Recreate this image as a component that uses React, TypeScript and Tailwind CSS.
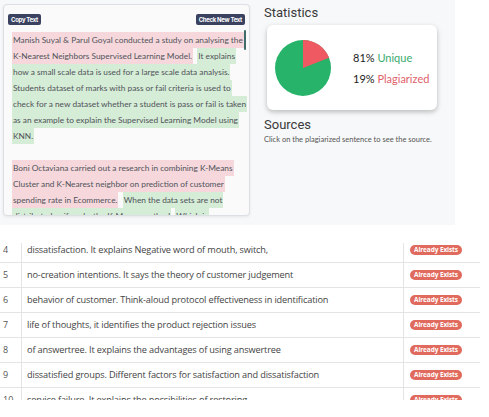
import React from 'react';

type Seg = { t: string; k: 'p' | 'u' | 'n' };

const lines: Seg[][] = [
    [{ t: 'Manish Suyal & Parul Goyal conducted a study on analysing the', k: 'p' }],
    [
        { t: 'K-Nearest Neighbors Supervised Learning Model.', k: 'p' },
        { t: '  ', k: 'n' },
        { t: 'It explains', k: 'u' },
    ],
    [{ t: 'how a small scale data is used for a large scale data analysis.', k: 'u' }],
    [{ t: 'Students dataset of marks with pass or fail criteria is used to', k: 'u' }],
    [{ t: 'check for a new dataset whether a student is pass or fail is taken', k: 'u' }],
    [{ t: 'as an example to explain the Supervised Learning Model using', k: 'u' }],
    [{ t: 'KNN.', k: 'u' }],
    [{ t: '\u00a0', k: 'n' }],
    [{ t: 'Boni Octaviana carried out a research in combining K-Means', k: 'p' }],
    [{ t: 'Cluster and K-Nearest neighbor on prediction of customer', k: 'p' }],
    [
        { t: 'spending rate in Ecommerce.', k: 'p' },
        { t: '  ', k: 'n' },
        { t: 'When the data sets are not', k: 'u' },
    ],
    [
        { t: 'distributed uniformly, the K-Means method', k: 'u' },
        { t: '  ', k: 'n' },
        { t: 'Which is', k: 'u' },
    ],
];

const rows = [
    { n: 4, text: 'dissatisfaction. It explains Negative word of mouth, switch,' },
    { n: 5, text: 'no-creation intentions. It says the theory of customer judgement' },
    { n: 6, text: 'behavior of customer. Think-aloud protocol effectiveness in identification' },
    { n: 7, text: 'life of thoughts, it identifies the product rejection issues' },
    { n: 8, text: 'of answertree. It explains the advantages of using answertree' },
    { n: 9, text: 'dissatisfied groups. Different factors for satisfaction and dissatisfaction' },
    { n: 10, text: 'service failure. It explains the possibilities of restoring' },
];

function Pie() {
    // 19% plagiarized slice starting at 12 o'clock
    const r = 28;
    const a = 0.19 * Math.PI * 2;
    const x = 30 + r * Math.sin(a);
    const y = 30 - r * Math.cos(a);
    return (
        <svg width="60" height="60" viewBox="0 0 60 60">
            <circle cx="30" cy="30" r={r} fill="#27b36a" />
            <path d={`M30 30 L30 2 A${r} ${r} 0 0 1 ${x} ${y} Z`} fill="#ef5a62" />
        </svg>
    );
}

export default function App() {
    return (
        <div className="w-[489px] h-[417px] bg-white overflow-hidden">
            {/* Top panel */}
            <div className="w-[455px] h-[225px] bg-[#f7f8f9] flex">
                <div className="ml-[3px] mt-[4px] w-[247px] h-[212px] bg-[#fafafa] border border-[#dcdfe3] rounded-[4px] shadow-[0_1px_3px_rgba(0,0,0,0.08)] flex flex-col overflow-hidden">
                    <div className="flex justify-between px-[4px] pt-[9px]">
                        <span className="bg-[#3a4260] text-white text-[6px] font-bold px-[3px] h-[11px] leading-[11px] rounded-[2px] font-['Inter',sans-serif] tracking-[-0.3px]">
                            Copy Text
                        </span>
                        <span className="bg-[#3a4260] text-white text-[6px] font-bold px-[3px] h-[11px] leading-[11px] rounded-[2px] font-['Inter',sans-serif] tracking-[-0.3px]">
                            Check New Text
                        </span>
                    </div>
                    <div className="relative flex-1 overflow-hidden pl-[8px] pt-[7px]">
                        <div className="absolute right-[3px] top-[5px] w-[2px] h-[20px] bg-[#3f6b6a] rounded-full" />
                        <div className="font-['Lato',sans-serif] text-[8.3px] text-[#50535a]">
                            {lines.map((l, i) => (
                                <div key={i} className="h-[16px] leading-[16px] whitespace-pre">
                                    {l.map((s, j) => (
                                        <span
                                            key={j}
                                            className={
                                                s.k === 'p'
                                                    ? 'bg-[#f6d8dc] py-[3px] px-[1px]'
                                                    : s.k === 'u'
                                                      ? 'bg-[#d5ecd6] py-[3px] px-[1px]'
                                                      : ''
                                            }
                                        >
                                            {s.t}
                                        </span>
                                    ))}
                                </div>
                            ))}
                        </div>
                    </div>
                </div>

                <div className="ml-[14px] pt-[5px] font-['Roboto',sans-serif]">
                    <div className="text-[13px] text-[#3a3a3a] leading-[16px]">Statistics</div>
                    <div className="mt-[4px] ml-[3px] w-[170px] h-[85px] bg-white rounded-[6px] shadow-[0_2px_5px_rgba(0,0,0,0.25)] flex items-center pl-[6px]">
                        <Pie />
                        <div className="ml-[20px] text-[11px] leading-[21px] font-['Lato',sans-serif]">
                            <div>
                                <span className="text-[#222]">81%</span>{' '}
                                <span className="text-[#3aab6e]">Unique</span>
                            </div>
                            <div>
                                <span className="text-[#222]">19%</span>{' '}
                                <span className="text-[#e0606a]">Plagiarized</span>
                            </div>
                        </div>
                    </div>
                    <div className="mt-[7px] text-[13px] text-[#3a3a3a] leading-[16px]">Sources</div>
                    <div className="mt-[1px] text-[7.5px] text-[#555] font-['Lato',sans-serif]">
                        Click on the plagiarized sentence to see the source.
                    </div>
                </div>
            </div>

            {/* Table */}
            <div className="mt-[18px] h-[157px] w-[480px] overflow-hidden font-['Open_Sans',sans-serif]">
                <div className="-mt-[5px]">
                    {rows.map((r) => (
                        <div key={r.n} className="flex h-[25px] border-b border-[#e4e4e4]">
                            <div className="w-[22px] border-r border-[#e4e4e4] pl-[3px] text-[9px] text-[#555] flex items-center">
                                {r.n}
                            </div>
                            <div className="w-[382px] border-r border-[#e4e4e4] pl-[5px] text-[9.2px] text-[#444] flex items-center tracking-[-0.15px]">
                                {r.text}
                            </div>
                            <div className="flex-1 flex items-center pl-[6px]">
                                <span className="bg-[#df6a5d] text-white text-[6.5px] font-bold rounded-full px-[4px] h-[10px] leading-[10px] tracking-[-0.1px]">
                                    Already Exists
                                </span>
                            </div>
                        </div>
                    ))}
                </div>
            </div>
        </div>
    );
}
